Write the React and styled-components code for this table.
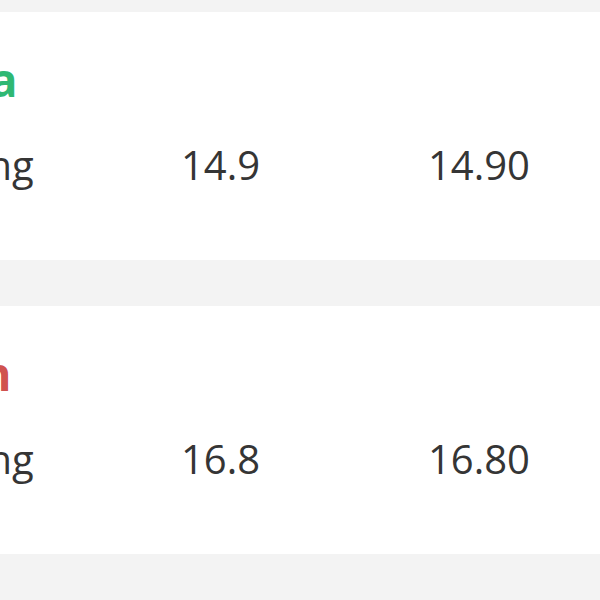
import styled, { createGlobalStyle } from "styled-components";

const Global = createGlobalStyle`
	html, body {
		margin: 0;
		padding: 0;
		background: #F3F3F3;
	}
	body {
		font-family: 'Open Sans', 'Liberation Sans', sans-serif;
	}
`

const quotes = [
	{ title: "Plata", tone: "up", label: "Closing", price: "14.9", exact: "14.90" },
	{ title: "Loan", tone: "down", label: "Closing", price: "16.8", exact: "16.80" },
]

const App = () => {
	return (
		<Viewport>
			<Global />
			<Sheet>
				{quotes.map((q) => (
					<Card key={q.title}>
						<Title $tone={q.tone}>{q.title}</Title>
						<Row>
							<Label>{q.label}</Label>
							<Value>{q.price}</Value>
							<Value>{q.exact}</Value>
						</Row>
					</Card>
				))}
			</Sheet>
		</Viewport>
	)
}

const Viewport = styled.div`
	width: 600px;
	height: 600px;
	overflow: hidden;
	background: #F3F3F3;
`

// the list is wider than the window, its left edge falls outside
const Sheet = styled.div`
	display: flex;
	flex-direction: column;
	gap: 46px;
	padding-top: 12px;
	margin-left: -125px;
	width: 725px;
`

const Card = styled.div`
	display: flex;
	flex-direction: column;
	gap: 35px;
	height: 248px;
	box-sizing: border-box;
	padding: 39px 0 0 24px;
	background: #FFFFFF;
`

const Title = styled.h2`
	margin: 0;
	font-size: 46px;
	line-height: 56px;
	font-weight: 700;
	color: ${(p) => (p.$tone === "up" ? "#2FB873" : "#D0524F")};
`

const Row = styled.div`
	display: grid;
	grid-template-columns: 282px 247px 1fr;
	font-size: 40px;
	line-height: 46px;
	color: #353535;
`

const Label = styled.span``

const Value = styled.span``

export default App;
